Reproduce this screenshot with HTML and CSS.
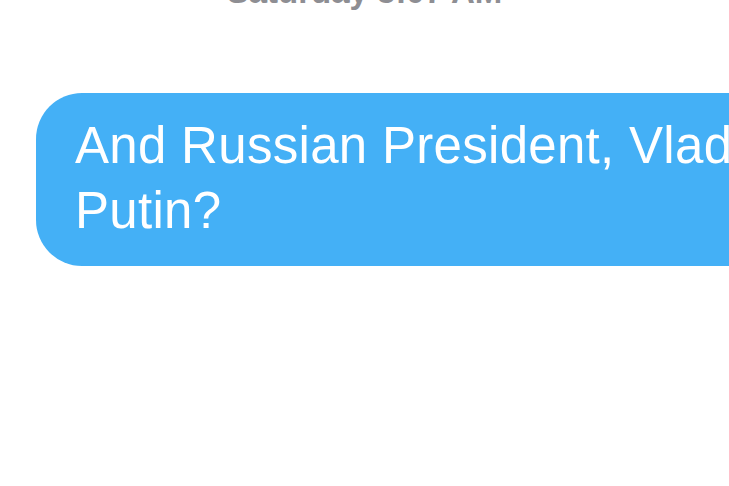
FILE: index.html
```html
<!DOCTYPE html>
<html lang="en">
<head>
<meta charset="UTF-8">
<meta name="viewport" content="width=device-width, initial-scale=1.0">
<title>Messages</title>
<link rel="stylesheet" href="styles.css">
</head>
<body>
<div class="thread">
  <div class="timestamp">Saturday 3:07 AM</div>
  <div class="bubble">
    And Russian President, Vladimir Putin?
  </div>
</div>
</body>
</html>
```

FILE: styles.css
```css
:root {
  --bolha: #44b0f6;
  --cinza: #8e8e93;
}

html, body {
  margin: 0;
  padding: 0;
  background: #fff;
  overflow: hidden;
  height: 100%;
}

body {
  font-family: 'Liberation Sans', Arial, sans-serif;
}

.thread {
  display: flex;
  flex-direction: column;
  align-items: flex-start;
}

.timestamp {
  align-self: center;
  margin-top: -27px;
  font-size: 33px;
  font-weight: bold;
  color: var(--cinza);
  line-height: 38px;
}

.bubble {
  margin-top: 82px;
  margin-left: 36px;
  width: 760px;
  padding: 20px 0 23px 39px;
  background: var(--bolha);
  color: #fff;
  font-size: 51px;
  line-height: 65px;
  letter-spacing: 0.3px;
  border-radius: 46px 0 0 46px;
}
```
